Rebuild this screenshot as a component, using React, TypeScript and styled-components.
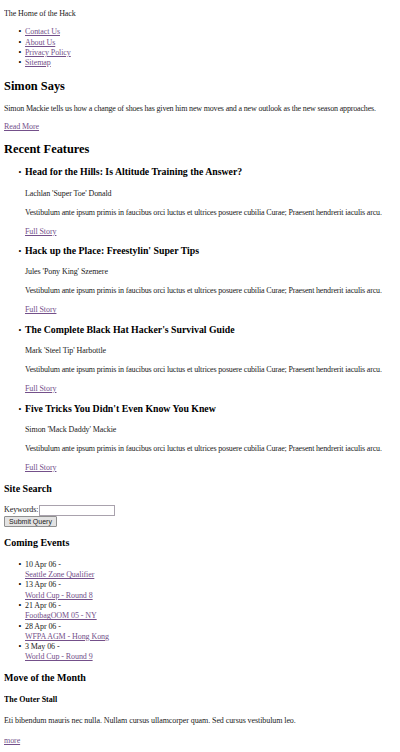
import React from "react";
import styled, { createGlobalStyle, css } from "styled-components";

const Global = createGlobalStyle`
  html, body { background: #ffffff; }
  body {
    margin: 4px;
    font-family: "Liberation Serif", "Times New Roman", serif;
    font-size: 8px;
    line-height: 10.3px;
    color: #1a1a1a;
    letter-spacing: -0.08px;
  }
`;

const bulletMarker = css`
  &::marker {
    content: "\\2022\\00a0\\00a0";
    font-size: 8px;
    font-weight: normal;
    color: #000;
  }
`;

const Page = styled.div`
  display: block;
`;

const Link = styled.a`
  color: #74508a;
  text-decoration: underline;
`;

const Para = styled.p<{ $top?: number; $tight?: boolean }>`
  margin: ${(p) => p.$top ?? 8.7}px 0 0;
  letter-spacing: ${(p) => (p.$tight ? "-0.165px" : "inherit")};
  white-space: ${(p) => (p.$tight ? "nowrap" : "normal")};
`;

const NavList = styled.ul`
  margin: 8px 0 0;
  padding-left: 21px;
  list-style: disc;
`;

const NavItem = styled.li`
  line-height: 10.3px;
  ${bulletMarker}
`;

const SectionHeading = styled.h2<{ $top: number }>`
  margin: ${(p) => p.$top}px 0 0;
  font-size: 12.4px;
  line-height: 13.8px;
  font-weight: bold;
  letter-spacing: 0;
  color: #000;
`;

const SideHeading = styled.h3<{ $top?: number }>`
  margin: ${(p) => p.$top ?? 10.4}px 0 0;
  font-size: 10px;
  line-height: 10.8px;
  font-weight: bold;
  letter-spacing: 0;
  color: #000;
`;

const FeatureList = styled.ul`
  margin: 10.7px 0 0;
  padding-left: 21px;
  list-style: disc;
`;

const FeatureItem = styled.li<{ $first?: boolean }>`
  margin-top: ${(p) => (p.$first ? 0 : 9.4)}px;
  ${bulletMarker}
`;

const FeatureTitle = styled.h3`
  margin: 0;
  font-size: 9.8px;
  line-height: 10.8px;
  font-weight: bold;
  letter-spacing: 0;
  color: #000;
`;

const Byline = styled.p`
  margin: 10.4px 0 0;
`;

const SearchForm = styled.form`
  margin: 10.5px 0 0;
  display: flex;
  flex-direction: column;
  align-items: flex-start;
`;

const FieldRow = styled.div`
  display: flex;
  align-items: center;
  height: 11px;
`;

const Label = styled.label`
  font-size: 8px;
`;

const TextInput = styled.input`
  box-sizing: border-box;
  width: 76px;
  height: 11px;
  margin: 0 0 0 1px;
  padding: 0;
  border: 1px solid #a9a2ad;
  background: #fff;
`;

const SubmitButton = styled.button`
  box-sizing: border-box;
  margin-top: 0;
  height: 11px;
  width: 53px;
  padding: 0;
  font-family: "Liberation Sans", Arial, sans-serif;
  font-size: 7px;
  line-height: 9px;
  letter-spacing: 0;
  color: #222;
  background: #e3e3e3;
  border: 1px solid #8f8f8f;
  border-radius: 1px;
`;

const EventList = styled.ul`
  margin: 11.5px 0 0;
  padding-left: 21px;
  list-style: disc;
`;

const EventItem = styled.li`
  line-height: 10.3px;
  ${bulletMarker}
`;

const MoveTitle = styled.h4`
  margin: 11.5px 0 0;
  font-size: 8px;
  line-height: 9.5px;
  font-weight: bold;
  letter-spacing: 0;
  color: #000;
`;

const features = [
  { title: "Head for the Hills: Is Altitude Training the Answer?", author: "Lachlan 'Super Toe' Donald" },
  { title: "Hack up the Place: Freestylin' Super Tips", author: "Jules 'Pony King' Szemere" },
  { title: "The Complete Black Hat Hacker's Survival Guide", author: "Mark 'Steel Tip' Harbottle" },
  { title: "Five Tricks You Didn't Even Know You Knew", author: "Simon 'Mack Daddy' Mackie" },
];

const events = [
  { date: "10 Apr 06 -", name: "Seattle Zone Qualifier" },
  { date: "13 Apr 06 -", name: "World Cup - Round 8" },
  { date: "21 Apr 06 -", name: "FootbagOOM 05 - NY" },
  { date: "28 Apr 06 -", name: "WFPA AGM - Hong Kong" },
  { date: "3 May 06 -", name: "World Cup - Round 9" },
];

const summary =
  "Vestibulum ante ipsum primis in faucibus orci luctus et ultrices posuere cubilia Curae; Praesent hendrerit iaculis arcu.";

export default function App() {
  return (
    <Page>
      <Global />
      <Para $top={5}>The Home of the Hack</Para>
      <NavList>
        <NavItem><Link href="#">Contact Us</Link></NavItem>
        <NavItem><Link href="#">About Us</Link></NavItem>
        <NavItem><Link href="#">Privacy Policy</Link></NavItem>
        <NavItem><Link href="#">Sitemap</Link></NavItem>
      </NavList>
      <SectionHeading $top={12}>Simon Says</SectionHeading>
      <Para $top={9.4} $tight>
        Simon Mackie tells us how a change of shoes has given him new moves and a new outlook as the new season approaches.
      </Para>
      <Para $top={7.6}><Link href="#">Read More</Link></Para>
      <SectionHeading $top={11}>Recent Features</SectionHeading>
      <FeatureList>
        {features.map((f, i) => (
          <FeatureItem key={f.title} $first={i === 0}>
            <FeatureTitle>{f.title}</FeatureTitle>
            <Byline>{f.author}</Byline>
            <Para $tight>{summary}</Para>
            <Para><Link href="#">Full Story</Link></Para>
          </FeatureItem>
        ))}
      </FeatureList>
      <SideHeading>Site Search</SideHeading>
      <SearchForm onSubmit={(e) => e.preventDefault()}>
        <FieldRow>
          <Label htmlFor="kw">Keywords:</Label>
          <TextInput id="kw" type="text" />
        </FieldRow>
        <SubmitButton type="submit">Submit Query</SubmitButton>
      </SearchForm>
      <SideHeading $top={10.5}>Coming Events</SideHeading>
      <EventList>
        {events.map((ev) => (
          <EventItem key={ev.name}>
            {ev.date}
            <br />
            <Link href="#">{ev.name}</Link>
          </EventItem>
        ))}
      </EventList>
      <SideHeading>Move of the Month</SideHeading>
      <MoveTitle>The Outer Stall</MoveTitle>
      <Para $top={11.5}>Eti bibendum mauris nec nulla. Nullam cursus ullamcorper quam. Sed cursus vestibulum leo.</Para>
      <Para $top={9.2}><Link href="#">more</Link></Para>
    </Page>
  );
}
